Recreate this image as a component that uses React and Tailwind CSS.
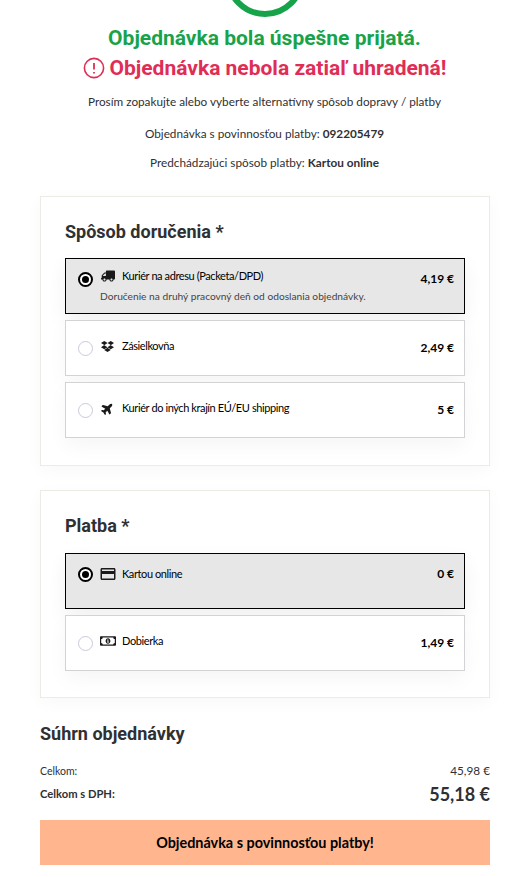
import { FaTruck, FaDropbox, FaPlane, FaRegMoneyBillAlt } from 'react-icons/fa';
import { MdCreditCard } from 'react-icons/md';

const body = "font-['Lato','Liberation_Sans',sans-serif]";
const head = "font-['Roboto','Liberation_Sans',sans-serif]";

function Option({ selected, icon, label, note, price }) {
  return (
    <div className={`flex h-[56px] items-start border pl-[12px] pr-[10px] ${selected ? 'border-black bg-[#e7e7e7] shadow-[0_8px_20px_rgba(0,0,0,0.06)]' : 'border-[#d3d3d6] bg-white shadow-[0_8px_20px_rgba(0,0,0,0.04)]'}`}>
      {selected ? (
        <div className="mt-[13px] flex h-[15px] w-[15px] shrink-0 items-center justify-center rounded-full border-2 border-black bg-white">
          <div className="h-[7px] w-[7px] rounded-full bg-black" />
        </div>
      ) : (
        <div className="mt-[20px] h-[15px] w-[15px] shrink-0 rounded-full border border-[#c9cadb] bg-white" />
      )}
      <div className="ml-[7px] min-w-0 flex-1">
        <div className={`flex h-[16px] items-center pl-[1px] text-[11px] leading-4 tracking-[-0.4px] text-black ${note ? 'mt-[9px]' : selected ? 'mt-[12px]' : 'mt-[17px]'}`}>
          <span className="flex w-[21px] shrink-0 items-center">{icon}</span>
          <span>{label}</span>
        </div>
        {note && <div className="mt-[4px] text-[10.2px] leading-4 text-[#444]">{note}</div>}
      </div>
      <div className={`shrink-0 text-[12px] font-bold leading-4 text-black ${selected ? 'mt-[12px]' : 'mt-[19px]'}`}>{price}</div>
    </div>
  );
}

export default function App() {
  return (
    <div className={`h-[877px] overflow-hidden bg-white ${body} text-[#2f3033]`}>
      <div className="mx-auto -mt-[63px] h-[80px] w-[80px] rounded-full border-[6px] border-[#17a34a]" />

      {/* Heading */}
      <div className={`mt-[7px] text-center text-[21px] font-bold leading-[28px] text-[#17a34a] ${head}`}>
        Objednávka bola úspešne prijatá.
      </div>
      <div className={`mt-[2px] flex items-center justify-center gap-[5px] text-[21px] font-bold leading-[28px] text-[#e02d55] ${head}`}>
        <svg width="22" height="22" viewBox="0 0 22 22" fill="none" stroke="currentColor">
          <circle cx="11" cy="11" r="9.6" strokeWidth="1.6" />
          <path d="M11 6v6.5M11 15v1.5" strokeWidth="1.8" />
        </svg>
        <span>Objednávka nebola zatiaľ uhradená!</span>
      </div>

      <div className="mt-[12px] text-center text-[11.75px] leading-[16px]">Prosím zopakujte alebo vyberte alternatívny spôsob dopravy / platby</div>
      <div className="mt-[16px] text-center text-[11.75px] leading-[16px]">Objednávka s povinnosťou platby: <b>092205479</b></div>
      <div className="mt-[13px] text-center text-[11.75px] leading-[16px]">Predchádzajúci spôsob platby: <b>Kartou online</b></div>

      <div className="ml-[40px] mt-[25px] w-[450px]">
        {/* Delivery */}
        <section className="h-[270px] border border-[#ecebe5] bg-white px-[24px] pt-[23px] shadow-[0_4px_16px_rgba(0,0,0,0.03)]">
          <h2 className={`text-[18px] font-bold leading-[24px] ${head}`}>Spôsob doručenia *</h2>
          <div className="mt-[14px] flex flex-col gap-[6px]">
            <Option selected icon={<FaTruck className="-scale-x-100 text-[14px] text-[#1a1a1a]" />} label="Kuriér na adresu (Packeta/DPD)" note="Doručenie na druhý pracovný deň od odoslania objednávky." price="4,19 €" />
            <Option icon={<FaDropbox className="text-[13px] text-[#1a1a1a]" />} label="Zásielkovňa" price="2,49 €" />
            <Option icon={<FaPlane className="-rotate-45 text-[13px] text-[#1a1a1a]" />} label="Kuriér do iných krajín EÚ/EU shipping" price="5 €" />
          </div>
        </section>

        {/* Payment */}
        <section className="mt-[24px] h-[208px] border border-[#ecebe5] bg-white px-[24px] pt-[23px] shadow-[0_4px_16px_rgba(0,0,0,0.03)]">
          <h2 className={`text-[18px] font-bold leading-[24px] ${head}`}>Platba *</h2>
          <div className="mt-[15px] flex flex-col gap-[6px]">
            <Option selected icon={<MdCreditCard className="-ml-[2px] text-[18px] text-[#1a1a1a]" />} label="Kartou online" price="0 €" />
            <Option icon={<FaRegMoneyBillAlt className="-ml-[1px] text-[16px] text-[#1a1a1a]" />} label="Dobierka" price="1,49 €" />
          </div>
        </section>

        {/* Summary */}
        <h2 className={`mt-[24px] text-[18px] font-bold leading-[24px] ${head}`}>Súhrn objednávky</h2>
        <div className="mt-[17px] flex items-center justify-between leading-[16px]">
          <span className="text-[10.5px]">Celkom:</span>
          <span className="text-[11.75px]">45,98 €</span>
        </div>
        <div className="mt-[3px] flex h-[24px] items-center justify-between">
          <span className="text-[11.2px] font-bold">Celkom s DPH:</span>
          <span className="text-[18px] font-bold">55,18 €</span>
        </div>
        <button className="mt-[14px] h-[45px] w-full bg-[#ffb68f] text-center text-[14.4px] font-bold text-black">
          Objednávka s povinnosťou platby!
        </button>
      </div>
    </div>
  );
}
